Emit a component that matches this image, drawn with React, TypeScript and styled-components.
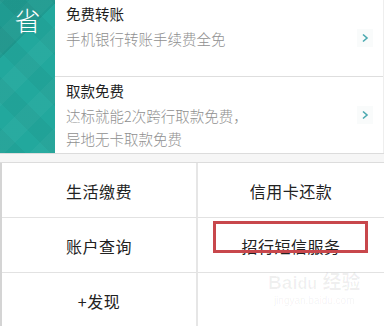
import styled, { createGlobalStyle } from "styled-components";

const GlobalStyle = createGlobalStyle`
  html, body {
    margin: 0;
    padding: 0;
    background: #fff;
  }
  body {
    font-family: "Noto Sans CJK SC", "Noto Sans", sans-serif;
  }
`;

const promos = [
  { title: "免费转账", lines: ["手机银行转账手续费全免"] },
  { title: "取款免费", lines: ["达标就能2次跨行取款免费，", "异地无卡取款免费"] },
];

const menus = ["生活缴费", "信用卡还款", "账户查询", "招行短信服务", "+发现", ""];

const Arrow = () => (
  <svg width="8" height="10" viewBox="0 0 8 10">
    <path d="M2 1.5 L6 5 L2 8.5" fill="none" stroke="#4aa9b0" strokeWidth="1.6" />
  </svg>
);

export default function App() {
  return (
    <>
      <GlobalStyle />
      <Page>
        <PromoPanel>
          <Badge>省</Badge>
          <PromoList>
            {promos.map((p, idx) => (
              <PromoItem key={idx}>
                <PromoText>
                  <PromoTitle>{p.title}</PromoTitle>
                  {p.lines.map((l, i) => (
                    <PromoLine key={i}>{l}</PromoLine>
                  ))}
                </PromoText>
                <ArrowBox>
                  <Arrow />
                </ArrowBox>
              </PromoItem>
            ))}
          </PromoList>
        </PromoPanel>
        <Band />
        <MenuGrid>
          {menus.map((m, idx) => (
            <MenuCell key={idx} $right={idx % 2 === 1}>
              {m}
            </MenuCell>
          ))}
        </MenuGrid>
        <Highlight />
        <Watermark>
          <WatermarkLogo>Bai<span>du</span> 经验</WatermarkLogo>
          <WatermarkUrl>jingyan.baidu.com</WatermarkUrl>
        </Watermark>
      </Page>
    </>
  );
}

const Page = styled.div`
  position: relative;
  width: 384px;
  height: 326px;
  overflow: hidden;
  background: #fff;
`;

const PromoPanel = styled.div`
  display: flex;
  height: 153px;
  border-right: 1px solid #eee;
  box-sizing: border-box;
`;

const Badge = styled.div`
  width: 55px;
  flex-shrink: 0;
  box-sizing: border-box;
  padding-top: 3px;
  text-align: center;
  color: #fff;
  font-size: 26px;
  line-height: 34px;
  font-weight: 300;
  background-color: #22a89d;
  background-image:
    linear-gradient(135deg, rgba(0, 0, 0, 0.08) 0 28%, transparent 28% 100%),
    repeating-linear-gradient(45deg, rgba(0, 0, 0, 0.035) 0 18px, transparent 18px 36px),
    repeating-linear-gradient(-45deg, rgba(255, 255, 255, 0.03) 0 18px, transparent 18px 36px);
`;

const PromoList = styled.div`
  flex: 1;
  display: flex;
  flex-direction: column;
`;

const PromoItem = styled.div`
  height: 76px;
  display: flex;
  align-items: center;
  justify-content: space-between;
  padding-left: 11px;
  box-sizing: border-box;
  &:first-child {
    height: 77px;
    border-bottom: 1px solid #dedede;
  }
`;

const PromoText = styled.div`
  display: flex;
  flex-direction: column;
  align-self: flex-start;
  padding-top: 4px;
`;

const PromoTitle = styled.div`
  font-size: 14.5px;
  line-height: 20px;
  color: #1e1e1e;
  font-weight: 400;
  margin-bottom: 3px;
`;

const PromoLine = styled.div`
  font-size: 14.5px;
  line-height: 23px;
  color: #909090;
  font-weight: 300;
`;

const ArrowBox = styled.div`
  width: 16px;
  height: 18px;
  margin-right: 10px;
  display: flex;
  align-items: center;
  justify-content: center;
  background: #f9fbfb;
`;

const Band = styled.div`
  height: 8px;
  background: #f6f6f6;
  border-top: 1px solid #dcdcdc;
  border-bottom: 1px solid #dcdcdc;
`;

const MenuGrid = styled.div`
  display: grid;
  grid-template-columns: 196px 1fr;
  grid-auto-rows: 55px;
  border-left: 2px solid #d4d4d4;
`;

const MenuCell = styled.div<{ $right: boolean }>`
  display: flex;
  align-items: center;
  justify-content: center;
  box-sizing: border-box;
  font-size: 16px;
  color: #222;
  letter-spacing: 0.5px;
  border-bottom: 1px solid #e2e2e2;
  border-right: ${(p) => (p.$right ? "none" : "2px solid #e6e6e6")};
  padding-top: 2px;
`;

const Highlight = styled.div`
  position: absolute;
  left: 213px;
  top: 221px;
  width: 155px;
  height: 32px;
  box-sizing: border-box;
  border: 3px solid #c8474c;
  pointer-events: none;
`;

const Watermark = styled.div`
  position: absolute;
  left: 268px;
  top: 272px;
  display: flex;
  flex-direction: column;
  align-items: center;
  color: rgba(0, 0, 0, 0.06);
  font-family: "Liberation Sans", "Noto Sans CJK SC", sans-serif;
`;

const WatermarkLogo = styled.div`
  font-size: 19px;
  font-weight: bold;
  line-height: 22px;
  span {
    font-size: 16px;
  }
`;

const WatermarkUrl = styled.div`
  font-size: 10px;
  line-height: 12px;
`;
